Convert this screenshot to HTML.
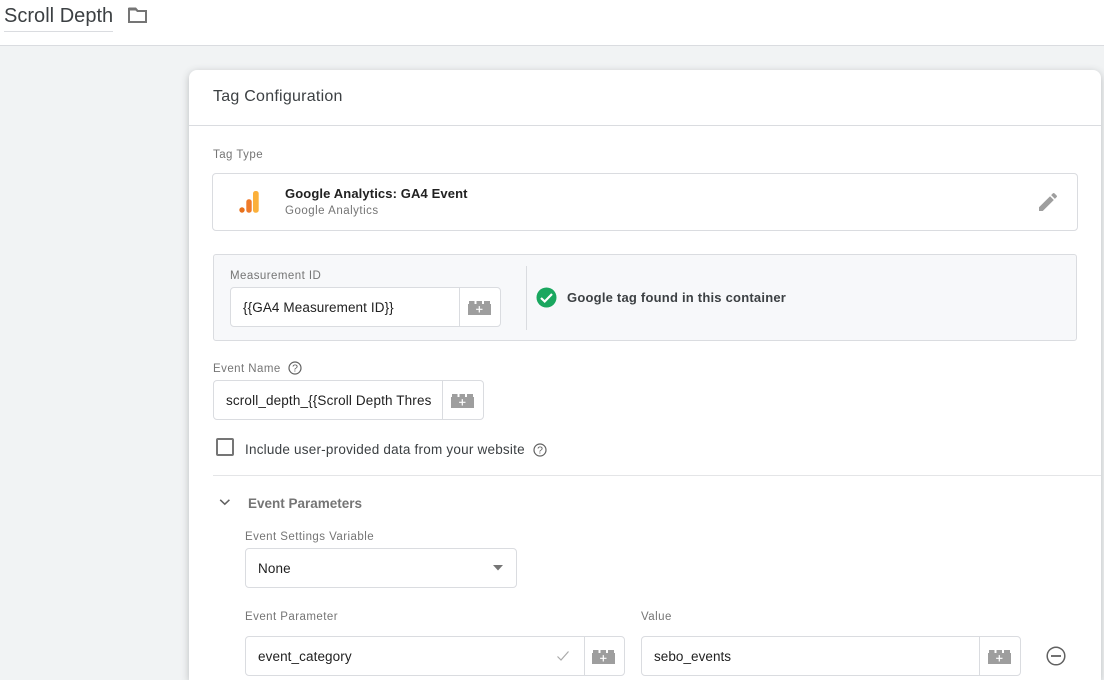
<!DOCTYPE html>
<html><head><meta charset="utf-8">
<style>
html,body{margin:0;padding:0;width:1104px;height:680px;overflow:hidden;background:#f1f3f4;font-family:"Liberation Sans",sans-serif;}
#w{position:relative;width:1104px;height:680px;overflow:hidden;}
.a{position:absolute;}
.t{position:absolute;white-space:nowrap;line-height:16px;}
.lbl{font-size:11.5px;color:#757575;letter-spacing:.45px;}
.val{font-size:13.5px;color:#212121;letter-spacing:.12px;}
.box{position:absolute;box-sizing:border-box;background:#fff;border:1px solid #dadce0;border-radius:4px;}
.sep{position:absolute;top:0;bottom:0;width:1px;background:#dadce0;}
svg{position:absolute;display:block;}
</style></head><body><div id="w">
<div class="a" style="left:0;top:0;width:1104px;height:46px;background:#fff;border-bottom:1px solid #dadce0;box-sizing:border-box;"></div>
<div class="t" style="left:4px;top:5px;font-size:20px;line-height:22px;color:#3c4043;letter-spacing:.02px;">Scroll Depth</div>
<div class="a" style="left:4px;top:31px;width:109px;height:1px;background:#dadce0;"></div>
<svg style="left:127px;top:7px" width="21" height="17" viewBox="0 0 21 17"><path d="M2 2h6.500l2 2H19v11H2z" fill="none" stroke="#757575" stroke-width="2"/><path d="M1.500 .500h7.500l2.500 3H1.500z" fill="#757575"/></svg>

<div class="a" style="left:189px;top:70px;width:912px;height:610px;background:#fff;border-radius:8px 8px 0 0;box-shadow:0 2px 8px rgba(60,64,67,.3);"></div>
<div class="t" style="left:213px;top:88px;font-size:16px;line-height:18px;color:#3c4043;letter-spacing:.25px;">Tag Configuration</div>
<div class="a" style="left:189px;top:125px;width:912px;height:1px;background:#dadce0;"></div>

<div class="t lbl" style="left:213px;top:147px;">Tag Type</div>
<div class="box" style="left:212px;top:173px;width:866px;height:58px;"></div>
<svg style="left:238px;top:190px" width="22" height="24" viewBox="0 0 22 24"><rect x="15" y="1" width="5.700" height="21.700" rx="2.500" fill="#fbb03b"/><rect x="8.300" y="9.300" width="5.400" height="13.400" rx="2.500" fill="#ee7a2b"/><circle cx="4" cy="20" r="2.700" fill="#e8711c"/></svg>
<div class="t" style="left:285px;top:186px;font-size:13px;font-weight:bold;color:#212121;letter-spacing:.12px;">Google Analytics: GA4 Event</div>
<div class="t" style="left:285px;top:203px;font-size:11.5px;color:#757575;letter-spacing:.5px;">Google Analytics</div>
<svg style="left:1036px;top:190px" width="24" height="24" viewBox="0 0 24 24"><path d="M3 17.250V21h3.750L17.810 9.940l-3.750-3.750L3 17.250zM20.710 7.040a1 1 0 0 0 0-1.410l-2.340-2.340a1 1 0 0 0-1.410 0l-1.830 1.830 3.750 3.750 1.830-1.830z" fill="#9e9e9e"/></svg>

<div class="a" style="left:213px;top:254px;width:864px;height:87px;box-sizing:border-box;background:#f7f8fa;border:1px solid #dadce0;border-radius:3px;"></div>
<div class="t lbl" style="left:230px;top:268px;">Measurement ID</div>
<div class="box" style="left:230px;top:287px;width:271px;height:40px;"><div class="sep" style="left:228px;"></div></div>
<div class="t val" style="left:243px;top:300px;letter-spacing:.1px;">{{GA4 Measurement ID}}</div>
<svg style="left:468px;top:301px" width="23" height="14" viewBox="0 0 23 14"><path d="M0 3H1V0H6.500V3H8.500V0H14V3H16V0H22V3H23V14H0z" fill="#9e9e9e"/><path d="M11.300 5.100v6.400M8.100 8.300h6.400" stroke="#fff" stroke-width="1.200"/></svg>
<div class="a" style="left:526px;top:266px;width:1px;height:64px;background:#dadce0;"></div>
<svg style="left:536px;top:287px" width="21" height="21" viewBox="0 0 21 21"><circle cx="10.500" cy="10.500" r="10" fill="#1aa75f"/><path d="M5 11l3.700 3.500L16 7" fill="none" stroke="#fff" stroke-width="2.200"/></svg>
<div class="t" style="left:567px;top:290px;font-size:13px;font-weight:bold;color:#3c4043;letter-spacing:.22px;">Google tag found in this container</div>

<div class="t lbl" style="left:213px;top:361px;">Event Name</div>
<svg style="left:288px;top:361px" width="14" height="14" viewBox="0 0 14 14"><circle cx="7" cy="7" r="6" fill="none" stroke="#616161" stroke-width="1.200"/><text x="7" y="10.600" text-anchor="middle" font-family="Liberation Sans" font-size="10.500" fill="#616161">?</text></svg>
<div class="box" style="left:213px;top:380px;width:271px;height:40px;"><div class="sep" style="left:228px;"></div></div>
<div class="t val" style="left:226px;top:393px;letter-spacing:.14px;">scroll_depth_{{Scroll Depth Thres</div>
<svg style="left:451px;top:394px" width="23" height="14" viewBox="0 0 23 14"><path d="M0 3H1V0H6.500V3H8.500V0H14V3H16V0H22V3H23V14H0z" fill="#9e9e9e"/><path d="M11.300 5.100v6.400M8.100 8.300h6.400" stroke="#fff" stroke-width="1.200"/></svg>

<div class="a" style="left:216px;top:438px;width:18px;height:18px;box-sizing:border-box;border:2px solid #757575;border-radius:2px;"></div>
<div class="t val" style="left:245px;top:442px;color:#3c4043;letter-spacing:.22px;">Include user-provided data from your website</div>
<svg style="left:533px;top:443px" width="14" height="14" viewBox="0 0 14 14"><circle cx="7" cy="7" r="6" fill="none" stroke="#616161" stroke-width="1.200"/><text x="7" y="10.600" text-anchor="middle" font-family="Liberation Sans" font-size="10.500" fill="#616161">?</text></svg>
<div class="a" style="left:213px;top:475px;width:888px;height:1px;background:#e4e5e7;"></div>

<svg style="left:219px;top:498px" width="12" height="9" viewBox="0 0 12 9"><path d="M1.200 1.800l4.600 4.400 4.600-4.400" fill="none" stroke="#616161" stroke-width="1.500"/></svg>
<div class="t" style="left:248px;top:496px;font-size:13.5px;font-weight:bold;color:#757575;letter-spacing:0;">Event Parameters</div>

<div class="t lbl" style="left:245px;top:529px;">Event Settings Variable</div>
<div class="box" style="left:245px;top:548px;width:272px;height:40px;"></div>
<div class="t val" style="left:258px;top:561px;">None</div>
<svg style="left:492px;top:565px" width="12" height="6" viewBox="0 0 12 6"><path d="M1 0h10L6 5.500z" fill="#757575"/></svg>

<div class="t lbl" style="left:245px;top:609px;">Event Parameter</div>
<div class="box" style="left:245px;top:636px;width:380px;height:40px;"><div class="sep" style="left:338px;"></div></div>
<div class="t val" style="left:258px;top:649px;letter-spacing:.1px;">event_category</div>
<svg style="left:556px;top:650px" width="14" height="12" viewBox="0 0 14 12"><path d="M1.500 6.500l3.500 3.500 7.500-8.500" fill="none" stroke="#aaa" stroke-width="1.200"/></svg>
<svg style="left:592px;top:650px" width="23" height="14" viewBox="0 0 23 14"><path d="M0 3H1V0H6.500V3H8.500V0H14V3H16V0H22V3H23V14H0z" fill="#9e9e9e"/><path d="M11.300 5.100v6.400M8.100 8.300h6.400" stroke="#fff" stroke-width="1.200"/></svg>

<div class="t lbl" style="left:641px;top:609px;">Value</div>
<div class="box" style="left:641px;top:636px;width:380px;height:40px;"><div class="sep" style="left:337px;"></div></div>
<div class="t val" style="left:654px;top:649px;letter-spacing:.05px;">sebo_events</div>
<svg style="left:988px;top:650px" width="23" height="14" viewBox="0 0 23 14"><path d="M0 3H1V0H6.500V3H8.500V0H14V3H16V0H22V3H23V14H0z" fill="#9e9e9e"/><path d="M11.300 5.100v6.400M8.100 8.300h6.400" stroke="#fff" stroke-width="1.200"/></svg>
<svg style="left:1046px;top:646px" width="20" height="20" viewBox="0 0 20 20"><circle cx="10" cy="10" r="8.800" fill="none" stroke="#616161" stroke-width="1.500"/><path d="M5 10h10" stroke="#616161" stroke-width="1.800"/></svg>
</div></body></html>
